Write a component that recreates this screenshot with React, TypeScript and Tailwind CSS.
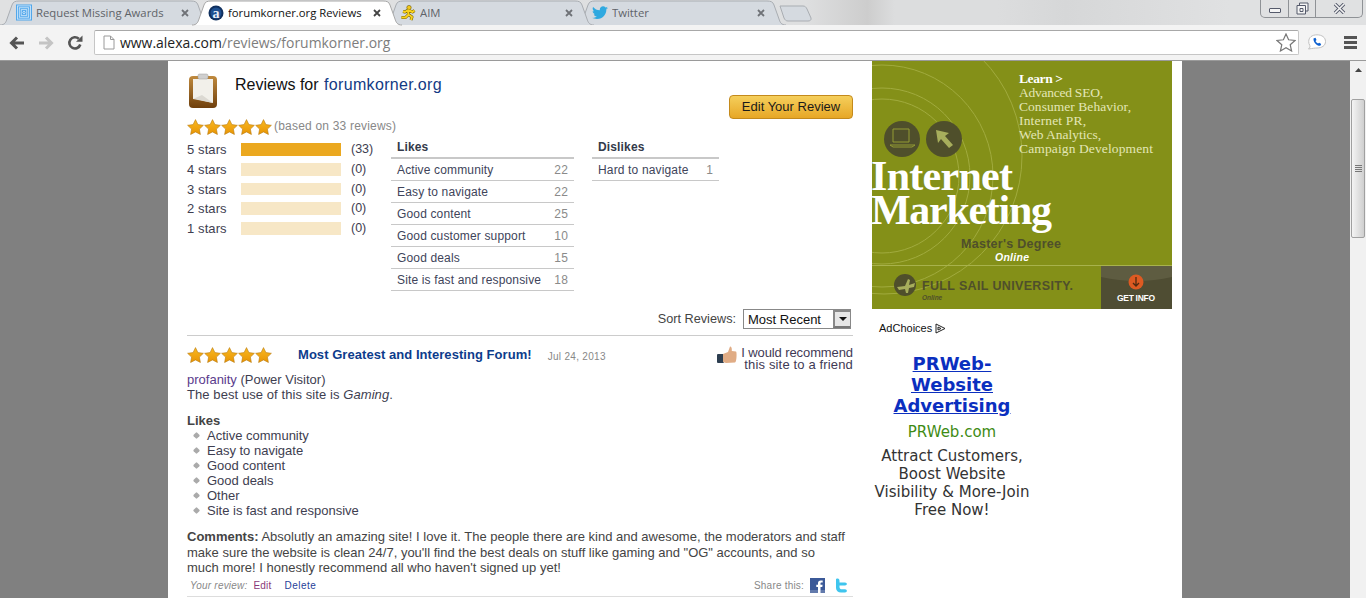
import React from "react";

const TabShape = ({ active }: { active?: boolean }) => (
  <svg className="absolute left-0 top-0" width="210" height="26" viewBox="0 0 210 26" preserveAspectRatio="none">
    <path
      d="M0 25 C5 25 6 22 7 19 L12 5 C13 2 15 1 19 1 L191 1 C195 1 197 2 198 5 L203 19 C204 22 205 25 210 25"
      fill={active ? "#ffffff" : "#d5dae0"}
      stroke={active ? "#a8a8a8" : "#a9adb2"}
      strokeWidth="1"
    />
  </svg>
);

const X = ({ dark }: { dark?: boolean }) => (
  <svg width="10" height="10" viewBox="0 0 10 10" className="mt-[1px] shrink-0">
    <path d="M2 2 L8 8 M8 2 L2 8" stroke={dark ? "#444" : "#6f7277"} strokeWidth="1.8" />
  </svg>
);

const Tab = ({
  title,
  icon,
  active,
  z,
  ml,
}: {
  title: string;
  icon: React.ReactNode;
  active?: boolean;
  z: string;
  ml: string;
}) => (
  <div className={`relative h-[26px] w-[210px] shrink-0 ${z} ${ml}`}>
    <TabShape active={active} />
    <div className="relative flex h-[25px] items-center pl-[16px] pr-[20px]">
      <span className="flex w-[16px] shrink-0 items-center">{icon}</span>
      <span
        className={`ml-[4px] flex-1 overflow-hidden whitespace-nowrap pt-[1px] font-['Open_Sans',sans-serif] text-[11.3px] ${
          active ? "text-[#111]" : "text-[#5f6368]"
        }`}
      >
        {title}
      </span>
      <X dark={active} />
    </div>
  </div>
);

const Star = () => (
  <svg width="17" height="16" viewBox="0 0 17 16" className="shrink-0">
    <defs>
      <linearGradient id="st" x1="0" y1="0" x2="0" y2="1">
        <stop offset="0" stopColor="#f9b921" />
        <stop offset="1" stopColor="#e89404" />
      </linearGradient>
    </defs>
    <path
      d="M8.5 0.6 L10.9 5.6 L16.4 6.3 L12.4 10.1 L13.4 15.5 L8.5 12.9 L3.6 15.5 L4.6 10.1 L0.6 6.3 L6.1 5.6 Z"
      fill="url(#st)"
      stroke="#b97c14"
      strokeWidth="0.6"
    />
  </svg>
);

const Stars = () => (
  <div className="flex w-[85px] shrink-0">
    <Star />
    <Star />
    <Star />
    <Star />
    <Star />
  </div>
);

const ratings = [
  { l: "5 stars", c: "(33)", full: true, cls: "h-[13px] mb-[7px]" },
  { l: "4 stars", c: "(0)", full: false, cls: "h-[13px] mb-[7px]" },
  { l: "3 stars", c: "(0)", full: false, cls: "h-[12px] mb-[7px]" },
  { l: "2 stars", c: "(0)", full: false, cls: "h-[13px] mb-[7px]" },
  { l: "1 stars", c: "(0)", full: false, cls: "h-[13px]" },
];

const likes: [string, number][] = [
  ["Active community", 22],
  ["Easy to navigate", 22],
  ["Good content", 25],
  ["Good customer support", 10],
  ["Good deals", 15],
  ["Site is fast and responsive", 18],
];

const Table = ({ title, rows, w }: { title: string; rows: [string, number][]; w: string }) => (
  <div className={w}>
    <div className="h-[17px] pl-[6px] text-[12px] font-bold leading-[14px] tracking-[0.15px] text-[#333a4a]">{title}</div>
    <div className="border-t-[2px] border-[#c8c8c8]">
      {rows.map(([t, n]) => (
        <div key={t} className="flex h-[22px] items-center justify-between border-b border-[#c8c8c8] pl-[6px] pr-[6px] pt-[1px] text-[12px] tracking-[0.15px] text-[#40445a]">
          <span>{t}</span>
          <span className="text-[#8a8a8a]">{n}</span>
        </div>
      ))}
    </div>
  </div>
);

const Banner = () => (
  <svg width="300" height="248" viewBox="0 0 300 248" className="block">
    <rect width="300" height="248" fill="#849018" />
    <g fill="none" stroke="#a1ab3e" strokeWidth="1">
      <circle cx="10" cy="115" r="77" />
      <circle cx="10" cy="115" r="88" />
      <circle cx="10" cy="115" r="111" />
      <circle cx="12" cy="95" r="138" />
    </g>
    <circle cx="30" cy="78" r="18" fill="#4f4f2b" />
    <circle cx="72" cy="78" r="18" fill="#4f4f2b" />
    <path d="M21 68 H37 V81 H21 Z M18 84 H43 L40 86 H21 Z" fill="none" stroke="#949c34" strokeWidth="1" />
    <path d="M64 69 L77 72 L73 75 L81 84 L77 87 L69 78 L66 82 Z" fill="#a7ae5c" />
    <text x="147" y="22" fontFamily="'Liberation Serif',serif" fontWeight="700" fontSize="13.5" fill="#fff" textLength="44">Learn &gt;</text>
    <g fontFamily="'Liberation Serif',serif" fontSize="13.5" fill="#e3e6b6">
      <text x="147" y="36" textLength="84">Advanced SEO,</text>
      <text x="147" y="50" textLength="112">Consumer Behavior,</text>
      <text x="147" y="64" textLength="67">Internet PR,</text>
      <text x="147" y="78" textLength="82">Web Analytics,</text>
      <text x="147" y="92" textLength="134">Campaign Development</text>
    </g>
    <g fontFamily="'Liberation Serif',serif" fontWeight="700" fontSize="42" fill="#fff">
      <text x="-1" y="129" textLength="142">Internet</text>
      <text x="-1" y="163" textLength="181">Marketing</text>
    </g>
    <text x="89" y="187" fontFamily="'Liberation Sans',sans-serif" fontWeight="700" fontSize="12.5" fill="#4f4f2b" textLength="100">Master's Degree</text>
    <text x="123" y="200" fontFamily="'Liberation Sans',sans-serif" fontWeight="700" fontStyle="italic" fontSize="10.5" fill="#fff" textLength="34">Online</text>
    <rect y="204" width="300" height="1" fill="#a8b24c" />
    <circle cx="33" cy="224" r="11" fill="#4f4f2b" />
    <path d="M25 226 L33 225 L36 218 L38 219 L37 224 L43 222 L42 226 L37 227 L36 232 L34 232 L33 228 L27 229 Z" fill="#a7ae5c" />
    <text x="50" y="229" fontFamily="'Liberation Sans',sans-serif" fontWeight="700" fontSize="12.5" fill="#4f4f2b" textLength="151">FULL SAIL UNIVERSITY.</text>
    <text x="50" y="239" fontFamily="'Liberation Sans',sans-serif" fontWeight="700" fontStyle="italic" fontSize="6.5" fill="#4f4f2b">Online</text>
    <rect x="229" y="205" width="71" height="43" fill="#4f4d33" />
    <path d="M229 205 H300 V216 Q265 224 229 216 Z" fill="#5e5c41" />
    <circle cx="264" cy="221" r="7.5" fill="#dd5a22" />
    <path d="M264 216 V225 M261 222 L264 225 L267 222" stroke="#4f2a10" strokeWidth="1.3" fill="none" />
    <text x="245" y="240" fontFamily="'Liberation Sans',sans-serif" fontWeight="700" fontSize="8.5" fill="#fff" textLength="38">GET INFO</text>
  </svg>
);

const reviewLikes = [
  "Active community",
  "Easy to navigate",
  "Good content",
  "Good deals",
  "Other",
  "Site is fast and responsive",
];

export default function App() {
  return (
    <div className="flex h-[598px] w-[1366px] flex-col overflow-hidden bg-[#808080] font-['Liberation_Sans',Arial,sans-serif]">
      {/* tab strip */}
      <div className="relative flex h-[25px] shrink-0 justify-between bg-[linear-gradient(90deg,#e0e1e2_0%,#dedfe0_59%,#cdcdcd_63.5%,#dcddde_65.5%,#dcddde_73%,#d6d7d8_78%,#e0e1e2_90%)]">
        <div className="flex">
          <Tab
            z="z-[1]"
            ml="ml-0"
            title="Request Missing Awards"
            icon={
              <svg width="17" height="17" viewBox="0 0 17 17">
                <rect width="17" height="17" fill="#4aa3ea" />
                <g fill="none" stroke="#cfe8fb" strokeWidth="1">
                  <rect x="1.5" y="1.5" width="14" height="14" />
                  <rect x="3.5" y="3.5" width="10" height="10" />
                  <rect x="5.5" y="5.5" width="6" height="6" />
                  <circle cx="8.5" cy="8.5" r="1.2" />
                </g>
              </svg>
            }
          />
          <Tab
            active
            z="z-[4]"
            ml="ml-[-18px]"
            title="forumkorner.org Reviews"
            icon={
              <svg width="16" height="16" viewBox="0 0 16 16">
                <circle cx="8" cy="8" r="7.5" fill="#10305f" />
                <circle cx="8" cy="8" r="5.5" fill="#1d4f90" />
                <text x="8" y="12.5" textAnchor="middle" fontSize="14" fontWeight="700" fill="#e6eef8" fontFamily="'Liberation Serif',serif">a</text>
              </svg>
            }
          />
          <Tab
            z="z-[2]"
            ml="ml-[-18px]"
            title="AIM"
            icon={
              <svg width="16" height="16" viewBox="0 0 16 16">
                <circle cx="9" cy="2.6" r="2.2" fill="#f4c81a" stroke="#6d5b00" strokeWidth="0.6" />
                <path d="M8 5 L12.5 7 L14.5 5.5 M8 5 L5 7 L3 6.5 M8 5 L8.5 9.5 L12 12 L11 15 M8.5 9.5 L5.5 12.5 L1.5 12.5" stroke="#6d5b00" strokeWidth="3" fill="none" strokeLinejoin="round" />
                <path d="M8 5 L12.5 7 L14.5 5.5 M8 5 L5 7 L3 6.5 M8 5 L8.5 9.5 L12 12 L11 15 M8.5 9.5 L5.5 12.5 L1.5 12.5" stroke="#f9d21c" strokeWidth="2" fill="none" strokeLinejoin="round" />
              </svg>
            }
          />
          <Tab
            z="z-[1]"
            ml="ml-[-18px]"
            title="Twitter"
            icon={
              <svg width="16" height="14" viewBox="0 0 24 20">
                <path
                  d="M24 2.4c-.9.4-1.8.7-2.8.8 1-.6 1.8-1.6 2.2-2.7-1 .6-2 1-3.1 1.200C19.300.7 18 0 16.600 0c-2.700 0-4.900 2.200-4.900 4.900 0 .4 0 .8.1 1.100C7.700 5.800 4.100 3.900 1.700.9 1.200 1.600 1 2.500 1 3.400c0 1.700.9 3.200 2.200 4.100-.8 0-1.600-.2-2.200-.6v.1c0 2.400 1.700 4.400 3.900 4.800-.4.1-.8.2-1.300.2-.3 0-.6 0-.9-.1.6 2 2.400 3.400 4.600 3.400-1.700 1.300-3.800 2.100-6.100 2.100-.4 0-.8 0-1.200-.1C2.200 18.300 4.800 19.100 7.500 19.100c9.100 0 14-7.500 14-14v-.6c1-.7 1.800-1.500 2.500-2.100z"
                  fill="#2fa9e0"
                />
              </svg>
            }
          />
          <svg width="34" height="17" viewBox="0 0 34 17" className="relative z-[1] ml-[-7px] mt-[5px]">
            <path d="M1 1 H24 C26 1 27 2 28 4 L32 13 C32.500 15 31 16 29 16 H9 C7 16 6 15 5 13 Z" fill="#d5dae0" stroke="#a9adb2" />
          </svg>
        </div>
        <div className="mr-[3px] flex h-[18px] w-[103px] divide-x divide-[#8f9296] rounded-b-[5px] border border-t-0 border-[#8f9296]">
          <div className="flex w-[28px] items-center justify-center pt-[3px]">
            <div className="h-[5px] w-[12px] rounded-[1px] border border-[#555a6b] bg-[#f4f4f4]" />
          </div>
          <div className="flex w-[27px] items-center justify-center">
            <svg width="13" height="13" viewBox="0 0 13 13">
              <path d="M3.500 3 V1 H12 V9 H10 M1 3.500 H9.500 V12 H1 Z M4 6.500 H7 V9.500 H4 Z" fill="#f4f4f4" stroke="#555a6b" />
            </svg>
          </div>
          <div className="flex flex-1 items-center justify-center">
            <svg width="13" height="11" viewBox="0 0 13 11">
              <path d="M2 1 L11 10 M11 1 L2 10" stroke="#555a6b" strokeWidth="3.400" />
              <path d="M2 1 L11 10 M11 1 L2 10" stroke="#f4f4f4" strokeWidth="1.600" />
            </svg>
          </div>
        </div>
      </div>

      {/* toolbar */}
      <div className="relative z-[3] flex h-[36px] shrink-0 items-center border-b border-[#9a9a9a] bg-[#f3f3f3] pl-[9px]">
        <svg width="16" height="14" viewBox="0 0 16 14" className="mt-[1px]">
          <path d="M15 7 H3 M8 1.500 L2.500 7 L8 12.500" stroke="#555" strokeWidth="3" fill="none" />
        </svg>
        <svg width="16" height="14" viewBox="0 0 16 14" className="ml-[13px] mt-[1px]">
          <path d="M1 7 H13 M8 1.500 L13.500 7 L8 12.500" stroke="#c4c4c4" strokeWidth="3" fill="none" />
        </svg>
        <svg width="16" height="16" viewBox="0 0 16 16" className="ml-[13px] mt-[1px]">
          <path d="M13.300 9.500 A5.600 5.600 0 1 1 11.800 3.800" stroke="#555" strokeWidth="2.600" fill="none" />
          <path d="M9 6.800 H15.500 V0.500 Z" fill="#555" />
        </svg>
        <div className="ml-[11px] flex h-[25px] w-[1205px] items-center rounded-[2px] border border-[#c6c6c6] border-t-[#a8a8a8] bg-white pl-[8px] pr-[2px]">
          <svg width="12" height="15" viewBox="0 0 12 15">
            <path d="M1 1 H7.500 L11 4.500 V14 H1 Z M7.500 1 V4.500 H11" fill="#fff" stroke="#9a9a9a" />
          </svg>
          <span className="ml-[5px] flex-1 whitespace-nowrap pt-[1px] font-['Open_Sans',sans-serif] text-[13.95px] text-[#222]">
            www.alexa.com<span className="text-[#7d7d7d]">/reviews/forumkorner.org</span>
          </span>
          <svg width="20" height="19" viewBox="0 0 20 19">
            <path d="M10 1 L12.600 6.800 L19 7.500 L14.200 11.700 L15.600 18 L10 14.800 L4.400 18 L5.800 11.700 L1 7.500 L7.400 6.800 Z" fill="#fff" stroke="#777" strokeWidth="1.200" />
          </svg>
        </div>
        <svg width="20" height="17" viewBox="0 0 20 17" className="ml-[8px]">
          <path d="M10 0.800 C15 0.800 18.500 3.500 18.500 7.500 C18.500 11.500 15 14 10 14 C8 14 6 14.300 1.500 15 C3 13.500 3.200 12.500 2.800 11.500 C2 10 1.700 9 1.700 7.500 C1.700 3.500 5 0.800 10 0.800 Z" fill="#fff" stroke="#c0c0c0" />
          <path d="M6.500 4.500 L8.500 3.800 L9.500 6 L8.500 7 C9 8.200 10 9 11 9.600 L12.200 8.700 L14.200 10 L13.300 11.800 C10 12.200 6.200 8.500 6.500 4.500 Z" fill="#0b5fd0" />
        </svg>
        <div className="ml-[17px] flex w-[13px] flex-col gap-[2px]">
          <div className="h-[3px] bg-[#555]" />
          <div className="h-[3px] bg-[#555]" />
          <div className="h-[3px] bg-[#555]" />
        </div>
      </div>

      {/* page */}
      <div className="flex min-h-0 flex-1">
        <div className="flex-1">
          <div className="ml-[168px] flex h-[537px] w-[1014px] overflow-hidden bg-white pl-[19px] text-[13px] leading-[15px] text-[#3e3e50]">
            {/* main column */}
            <div className="w-[666px] shrink-0">
              {/* heading */}
              <div className="flex h-[58px]">
                <svg width="32" height="36" viewBox="0 0 32 36" className="ml-[1px] mt-[12px] shrink-0">
                  <defs>
                    <linearGradient id="clip" x1="0" y1="0" x2="0" y2="1">
                      <stop offset="0" stopColor="#c08a3e" />
                      <stop offset="1" stopColor="#6f3f0c" />
                    </linearGradient>
                  </defs>
                  <rect x="1" y="3" width="28" height="32" rx="4" fill="url(#clip)" />
                  <path d="M5 6 H25 V30 L8 26 L5 26 Z" fill="#f2f0ea" />
                  <path d="M5 26 L25 30 L14 22 Z" fill="#dcd9d2" />
                  <rect x="10" y="1" width="10" height="5" rx="1.500" fill="#cfcfcf" stroke="#9c9c9c" strokeWidth="0.500" />
                </svg>
                <div className="ml-[15px] mt-[14px] whitespace-nowrap text-[16px] leading-[20px] text-[#111]">
                  Reviews for <span className="ml-[1px] tracking-[0.33px] text-[#123a84]">forumkorner.org</span>
                </div>
                <button className="ml-auto mt-[34px] h-[24px] w-[124px] rounded-[4px] border border-[#c48a1c] bg-[linear-gradient(#f5cf5c,#e7a726)] text-[13px] leading-[20px] text-[#1a1a1a]">
                  Edit Your Review
                </button>
              </div>

              {/* summary */}
              <div className="flex h-[15px] items-center">
                <Stars />
                <span className="ml-[2px] text-[12px] tracking-[0.2px] text-[#888]">(based on 33 reviews)</span>
              </div>

              <div className="mt-[9px] flex h-[155px]">
                <div className="w-[204px] shrink-0">
                  {ratings.map((r) => (
                    <div key={r.l} className={`flex items-center ${r.cls}`}>
                      <span className="w-[54px] tracking-[0.1px]">{r.l}</span>
                      <div className={`h-full w-[100px] ${r.full ? "bg-[#eba81f]" : "bg-[#f7e7c6]"}`} />
                      <span className="ml-[10px] text-[12.5px]">{r.c}</span>
                    </div>
                  ))}
                </div>
                <Table title="Likes" rows={likes} w="w-[183px] -mt-[3px]" />
                <Table title="Dislikes" rows={[["Hard to navigate", 1]]} w="w-[127px] ml-[18px] -mt-[3px]" />
              </div>

              {/* sort */}
              <div className="mt-[11px] flex h-[20px] items-center justify-end pr-[2px] text-[12.7px]">
                <span className="mr-[7px] pt-[1px] text-[#444]">Sort Reviews:</span>
                <div className="flex h-[20px] w-[108px] items-center justify-between border border-[#888] pl-[4px] text-[13px] text-[#111]">
                  <span>Most Recent</span>
                  <div className="flex h-full w-[17px] items-center justify-center border-[2px] border-[#888] border-b-[#777] border-r-0 bg-[#e6e6e6]">
                    <svg width="8" height="4" viewBox="0 0 8 4">
                      <path d="M0 0 H8 L4 4 Z" fill="#111" />
                    </svg>
                  </div>
                </div>
              </div>

              <div className="mt-[6px] border-t border-[#cccccc]" />

              {/* review */}
              <div className="mt-[10px] flex">
                <div className="mt-[1px]">
                  <Stars />
                </div>
                <div className="ml-[26px] mt-[1px] whitespace-nowrap text-[13px] font-bold leading-[16px] tracking-[0.05px] text-[#0d3c8c]">
                  Most Greatest and Interesting Forum!
                </div>
                <div className="ml-[16px] mt-[3px] whitespace-nowrap text-[10px] tracking-[0.3px] text-[#888]">Jul 24, 2013</div>
                <div className="ml-auto flex items-start">
                  <svg width="20" height="18" viewBox="0 0 20 18" className="mr-[4px]">
                    <rect x="0" y="8" width="7" height="9" rx="1" fill="#2d3e50" />
                    <path d="M6 8 L11 6 L13 0.500 C14.500 0.500 15 2 14.800 5 L19 5.500 C20 6 19.700 16 18 16.500 L9 17 L6 16 Z" fill="#e0ac85" />
                  </svg>
                  <div className="mt-[1px] text-right leading-[12px] text-[#3f3a55]">
                    <span className="tracking-[-0.1px]">I would recommend</span>
                    <br />
                    <span className="tracking-[0.15px]">this site to a friend</span>
                  </div>
                </div>
              </div>

              <div className="mt-[1px]">
                <span className="text-[#5a3b8c]">profanity</span> (Power Visitor)
              </div>
              <div className="tracking-[0.08px]">
                The best use of this site is <em>Gaming</em>.
              </div>

              <div className="mt-[11px] font-bold text-[#444]">Likes</div>
              <ul>
                {reviewLikes.map((l) => (
                  <li key={l} className="flex items-center pl-[7px]">
                    <span className="h-[5px] w-[5px] rotate-45 rounded-[1px] bg-[#aaaaaa]" />
                    <span className="ml-[8px]">{l}</span>
                  </li>
                ))}
              </ul>

              <p className="mt-[11px] leading-[15.5px] text-[#444]">
                <b>Comments:</b> Absolutly an amazing site! I love it. The people there are kind and awesome, the moderators and staff make sure the website is clean 24/7, you'll find the best deals on stuff like gaming and "OG" accounts, and so
                <br />
                much more! I honestly recommend all who haven't signed up yet!
              </p>

              <div className="mt-[1px] flex h-[18px] items-center text-[10px] tracking-[0.2px]">
                <i className="ml-[3px] text-[#888]">Your review:</i>
                <span className="ml-[6px] text-[#8a3a78]">Edit</span>
                <span className="ml-[13px] tracking-[0.5px] text-[#1f3f99]">Delete</span>
                <span className="ml-auto text-[#888]">Share this:</span>
                <svg width="15" height="15" viewBox="0 0 15 15" className="ml-[6px]">
                  <rect width="15" height="15" fill="#3b5998" />
                  <path d="M10.500 15 V9 H12.300 L12.600 6.800 H10.500 V5.500 C10.500 4.800 10.800 4.500 11.600 4.500 H12.700 V2.500 H10.800 C9 2.500 8 3.500 8 5.200 V6.800 H6.300 V9 H8 V15 Z" fill="#fff" />
                  <rect y="12" width="15" height="3" fill="#fff" opacity="0.2" />
                </svg>
                <svg width="13" height="15" viewBox="0 0 13 15" className="ml-[10px] mr-[5px]">
                  <path d="M1 1 C3.500 0 4.500 1 4.500 3 V4.500 H10 C12.500 4.500 12.500 7.500 10 7.500 H4.500 V9 C4.500 10.500 5.500 11.300 7 11.300 H10 C12.500 11.300 12.500 14.500 10 14.500 H6 C3 14.500 1 12.500 1 10 Z" fill="#3fc5ee" />
                </svg>
              </div>

              <div className="mt-[1px] border-t border-[#dddddd]" />
            </div>

            {/* right column */}
            <div className="ml-[19px] w-[300px] shrink-0">
              <Banner />
              <div className="ml-[7px] mt-[12px] flex items-center text-[11px] leading-[14px] text-[#111]">
                AdChoices
                <svg width="11" height="11" viewBox="0 0 11 11" className="ml-[3px]">
                  <path d="M1 1 L10 5.500 L1 10 Z M3 4 L6 5.500 L3 7 Z" fill="none" stroke="#222" strokeWidth="1" />
                </svg>
              </div>
              <div className="mt-[18px] w-[160px] text-center font-['DejaVu_Sans',sans-serif]">
                <div className="text-[18px] font-bold leading-[21px] text-[#0b2fbf] underline">
                  PRWeb-
                  <br />
                  Website
                  <br />
                  Advertising
                </div>
                <div className="mt-[6px] text-[15px] leading-[20px] text-[#3e8b14]">PRWeb.com</div>
                <div className="mt-[5px] text-[15px] leading-[18px] text-[#333]">
                  Attract Customers,
                  <br />
                  Boost Website
                  <br />
                  Visibility &amp; More-Join
                  <br />
                  Free Now!
                </div>
              </div>
            </div>
          </div>
        </div>

        {/* scrollbar */}
        <div className="flex w-[16px] shrink-0 flex-col items-center bg-[#f1f1f1] pt-[7px]">
          <svg width="7" height="4" viewBox="0 0 7 4">
            <path d="M0 4 L3.500 0 L7 4 Z" fill="#444" />
          </svg>
          <div className="mt-[27px] flex h-[139px] w-[14px] items-center justify-center rounded-[2px] border border-[#a0a0a0] bg-[linear-gradient(90deg,#f4f4f4,#cfcfcf)]">
            <div className="flex w-[7px] flex-col gap-[1px]">
              <div className="h-px bg-[#777]" />
              <div className="h-px bg-[#777]" />
              <div className="h-px bg-[#777]" />
              <div className="h-px bg-[#777]" />
            </div>
          </div>
        </div>
      </div>
    </div>
  );
}
